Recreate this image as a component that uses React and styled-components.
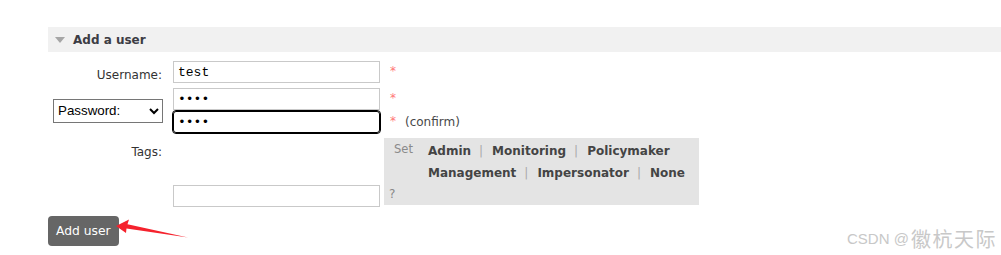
import React from "react";
import styled, { createGlobalStyle } from "styled-components";

const GlobalStyle = createGlobalStyle`
  body {
    margin: 0;
    background: #fff;
    font-family: "DejaVu Sans", Verdana, sans-serif;
    font-size: 12px;
    color: #484848;
  }
`;

const Page = styled.div`
  position: relative;
  height: 255px;
  box-sizing: border-box;
  padding: 27px 0 0 48px;
  overflow: hidden;
`;

const SectionHeader = styled.h2`
  display: flex;
  align-items: center;
  gap: 8px;
  height: 25px;
  margin: 0;
  padding-left: 7px;
  background: #f1f1f1;
  font-size: 12px;
  font-weight: bold;
  color: #3c3c44;
`;

const Triangle = styled.span`
  width: 0;
  height: 0;
  border-left: 5px solid transparent;
  border-right: 5px solid transparent;
  border-top: 6px solid #a6a6a6;
`;

const Form = styled.div`
  display: grid;
  grid-template-columns: 125px 211px 1fr;
  row-gap: 5px;
  margin-top: 9px;
`;

const Label = styled.div`
  padding-right: 11px;
  text-align: right;
  align-self: ${(p) => p.align || "center"};
  padding-top: ${(p) => p.top || 0}px;
  color: #333;
`;

const Cell = styled.div`
  display: flex;
  flex-direction: column;
  justify-content: ${(p) => p.justify || "center"};
  gap: ${(p) => p.gap || 0}px;
`;

const TextInput = styled.input`
  box-sizing: border-box;
  width: 207px;
  height: 22px;
  margin: 0;
  padding: 0 4px;
  border: 1px solid ${(p) => (p.focused ? "#000" : "#c9c9c9")};
  border-radius: ${(p) => (p.focused ? "3px" : "0")};
  outline: ${(p) => (p.focused ? "1px solid #000" : "none")};
  font-family: "Liberation Mono", "DejaVu Sans Mono", monospace;
  font-size: 13px;
  color: #000;
  background: #fff;
`;

const Select = styled.select`
  box-sizing: border-box;
  width: 110px;
  height: 24px;
  margin-left: 5px;
  font-family: "Liberation Sans", Arial, sans-serif;
  font-size: 13.33px;
  color: #000;
  border: 1px solid #767676;
  border-radius: 0;
  background: #fff;
`;

const SelectCell = styled.div`
  display: flex;
  align-items: center;
`;

const Extra = styled.div`
  display: flex;
  align-items: center;
  height: 22px;
  padding-left: 6px;
  gap: 9px;
`;

const Req = styled.span`
  color: #f77;
  font-size: 12px;
  line-height: 1;
  margin-top: -3px;
`;

const TagBox = styled.div`
  width: 315px;
  box-sizing: border-box;
  background: #e4e4e4;
  padding: 2px 0 1px;
`;

const TagRow = styled.div`
  display: flex;
`;

const SetLabel = styled.span`
  width: 34px;
  padding-left: 10px;
  box-sizing: content-box;
  font-size: 11.5px;
  line-height: 18px;
  color: #8a8a8a;
`;

const TagLines = styled.div`
  display: flex;
  flex-direction: column;
`;

const TagLine = styled.div`
  display: flex;
  line-height: 22px;
`;

const TagLink = styled.span`
  font-weight: bold;
  color: #444;
`;

const Sep = styled.span`
  padding: 0 9px 0 8px;
  color: #aaa;
`;

const Help = styled.div`
  padding-left: 5px;
  line-height: 20px;
  color: #888;
`;

const Button = styled.button`
  margin-top: 11px;
  height: 30px;
  padding: 0 8px;
  border: none;
  border-radius: 4px;
  background: #666;
  color: #fff;
  font-family: "DejaVu Sans", Verdana, sans-serif;
  font-size: 12.3px;
`;

const Arrow = styled.svg`
  position: absolute;
  left: 110px;
  top: 214px;
`;

const Watermark = styled.div`
  position: absolute;
  left: 847px;
  top: 224px;
  display: flex;
  align-items: center;
  color: #c8c8c8;
  white-space: nowrap;
`;

const WmLatin = styled.span`
  font-family: "Liberation Sans", Arial, sans-serif;
  font-size: 15px;
  margin-right: 2px;
`;

const WmCjk = styled.span`
  font-family: "Noto Sans CJK SC", sans-serif;
  font-size: 20px;
  letter-spacing: 1.5px;
`;

const tagLines = [
  ["Admin", "Monitoring", "Policymaker"],
  ["Management", "Impersonator", "None"],
];

export default function App() {
  return (
    <Page>
      <GlobalStyle />
      <SectionHeader>
        <Triangle />
        Add a user
      </SectionHeader>
      <Form>
        <Label top={5}>Username:</Label>
        <Cell>
          <TextInput defaultValue="test" />
        </Cell>
        <Extra>
          <Req>*</Req>
        </Extra>

        <SelectCell>
          <Select defaultValue="password">
            <option value="password">Password:</option>
            <option value="none">No password</option>
          </Select>
        </SelectCell>
        <Cell gap={1}>
          <TextInput type="password" defaultValue="test" />
          <TextInput type="password" defaultValue="test" focused />
        </Cell>
        <Cell gap={1}>
          <Extra>
            <Req>*</Req>
          </Extra>
          <Extra>
            <Req>*</Req>
            <span>(confirm)</span>
          </Extra>
        </Cell>

        <Label align="start" top={7}>Tags:</Label>
        <Cell justify="flex-end">
          <TextInput style={{ marginBottom: -2 }} />
        </Cell>
        <TagBox>
          <TagRow>
            <SetLabel>Set</SetLabel>
            <TagLines>
              {tagLines.map((line, i) => (
                <TagLine key={i}>
                  {line.map((t, j) => (
                    <React.Fragment key={t}>
                      {j > 0 && <Sep>|</Sep>}
                      <TagLink>{t}</TagLink>
                    </React.Fragment>
                  ))}
                </TagLine>
              ))}
            </TagLines>
          </TagRow>
          <Help>?</Help>
        </TagBox>
      </Form>
      <Button>Add user</Button>

      <Arrow width="80" height="28" viewBox="110 214 80 28">
        <polygon
          points="116,226 129,219.5 127.5,224.3 188,237.5 126.5,228.6 126,233"
          fill="#f5222d"
        />
      </Arrow>
      <Watermark>
        <WmLatin>CSDN @</WmLatin>
        <WmCjk>徽杭天际</WmCjk>
      </Watermark>
    </Page>
  );
}
